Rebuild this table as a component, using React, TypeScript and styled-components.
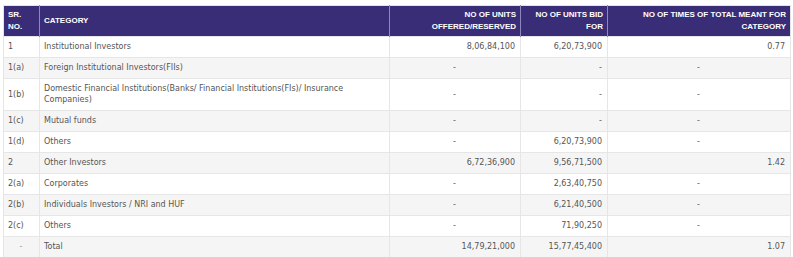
import styled, { createGlobalStyle } from 'styled-components'

const GlobalStyle = createGlobalStyle`
  html, body {
    margin: 0;
    padding: 0;
    background: #ffffff;
  }
`

type Row = {
  sr: string
  category: string
  offered: string
  bid: string
  times: string
}

const rows: Row[] = [
  { sr: '1', category: 'Institutional Investors', offered: '8,06,84,100', bid: '6,20,73,900', times: '0.77' },
  { sr: '1(a)', category: 'Foreign Institutional Investors(FIIs)', offered: '-', bid: '-', times: '-' },
  {
    sr: '1(b)',
    category: 'Domestic Financial Institutions(Banks/ Financial Institutions(FIs)/ Insurance Companies)',
    offered: '-',
    bid: '-',
    times: '-',
  },
  { sr: '1(c)', category: 'Mutual funds', offered: '-', bid: '-', times: '-' },
  { sr: '1(d)', category: 'Others', offered: '-', bid: '6,20,73,900', times: '-' },
  { sr: '2', category: 'Other Investors', offered: '6,72,36,900', bid: '9,56,71,500', times: '1.42' },
  { sr: '2(a)', category: 'Corporates', offered: '-', bid: '2,63,40,750', times: '-' },
  { sr: '2(b)', category: 'Individuals Investors / NRI and HUF', offered: '-', bid: '6,21,40,500', times: '-' },
  { sr: '2(c)', category: 'Others', offered: '-', bid: '71,90,250', times: '-' },
  { sr: '-', category: 'Total', offered: '14,79,21,000', bid: '15,77,45,400', times: '1.07' },
]

const App = () => {
  return (
    <Page>
      <GlobalStyle />
      <Table>
        <colgroup>
          <col style={{ width: 36 }} />
          <col style={{ width: 350 }} />
          <col style={{ width: 131 }} />
          <col style={{ width: 87 }} />
          <col style={{ width: 183 }} />
        </colgroup>
        <thead>
          <tr>
            <Th>SR.<br />NO.</Th>
            <Th>CATEGORY</Th>
            <Th $right>NO OF UNITS<br />OFFERED/RESERVED</Th>
            <Th $right>NO OF UNITS BID<br />FOR</Th>
            <Th $right>NO OF TIMES OF TOTAL MEANT FOR<br />CATEGORY</Th>
          </tr>
        </thead>
        <tbody>
          {rows.map((r) => (
            <Tr key={r.sr + r.category}>
              <Td $align={r.sr === '-' ? 'center' : 'left'} $muted={r.sr === '-'}>{r.sr}</Td>
              <Td>{r.category}</Td>
              <Td $align={r.offered === '-' ? 'center' : 'right'}>{r.offered}</Td>
              <Td $align="right">{r.bid}</Td>
              <Td $align={r.times === '-' ? 'center' : 'right'}>{r.times}</Td>
            </Tr>
          ))}
        </tbody>
      </Table>
    </Page>
  )
}

export default App

const Page = styled.div`
  padding: 5px 3px 0 3px;
  font-family: "DejaVu Sans", "Noto Sans", sans-serif;
`
const Table = styled.table`
  width: 787px;
  table-layout: fixed;
  border-collapse: collapse;
  border: 1px solid #e4e4e4;
`
const Th = styled.th<{ $right?: boolean }>`
  background: #3a2d78;
  color: #ffffff;
  font-family: "Liberation Sans", Arial, sans-serif;
  font-size: 8px;
  font-weight: 700;
  line-height: 12px;
  padding: 3px 4px;
  text-align: ${(p) => (p.$right ? 'right' : 'left')};
  vertical-align: middle;
  border-left: 1px solid #8f87bb;
  &:first-child {
    border-left: none;
  }
`
const Tr = styled.tr`
  &:nth-child(even) {
    background: #f5f5f5;
  }
`
const Td = styled.td<{ $align?: 'left' | 'right' | 'center'; $muted?: boolean }>`
  font-size: 8px;
  line-height: 11px;
  color: ${(p) => (p.$muted ? '#999999' : '#555555')};
  padding: 4px 5px 5px 4px;
  text-align: ${(p) => p.$align ?? 'left'};
  vertical-align: middle;
  border: 1px solid #e6e6e6;
`
